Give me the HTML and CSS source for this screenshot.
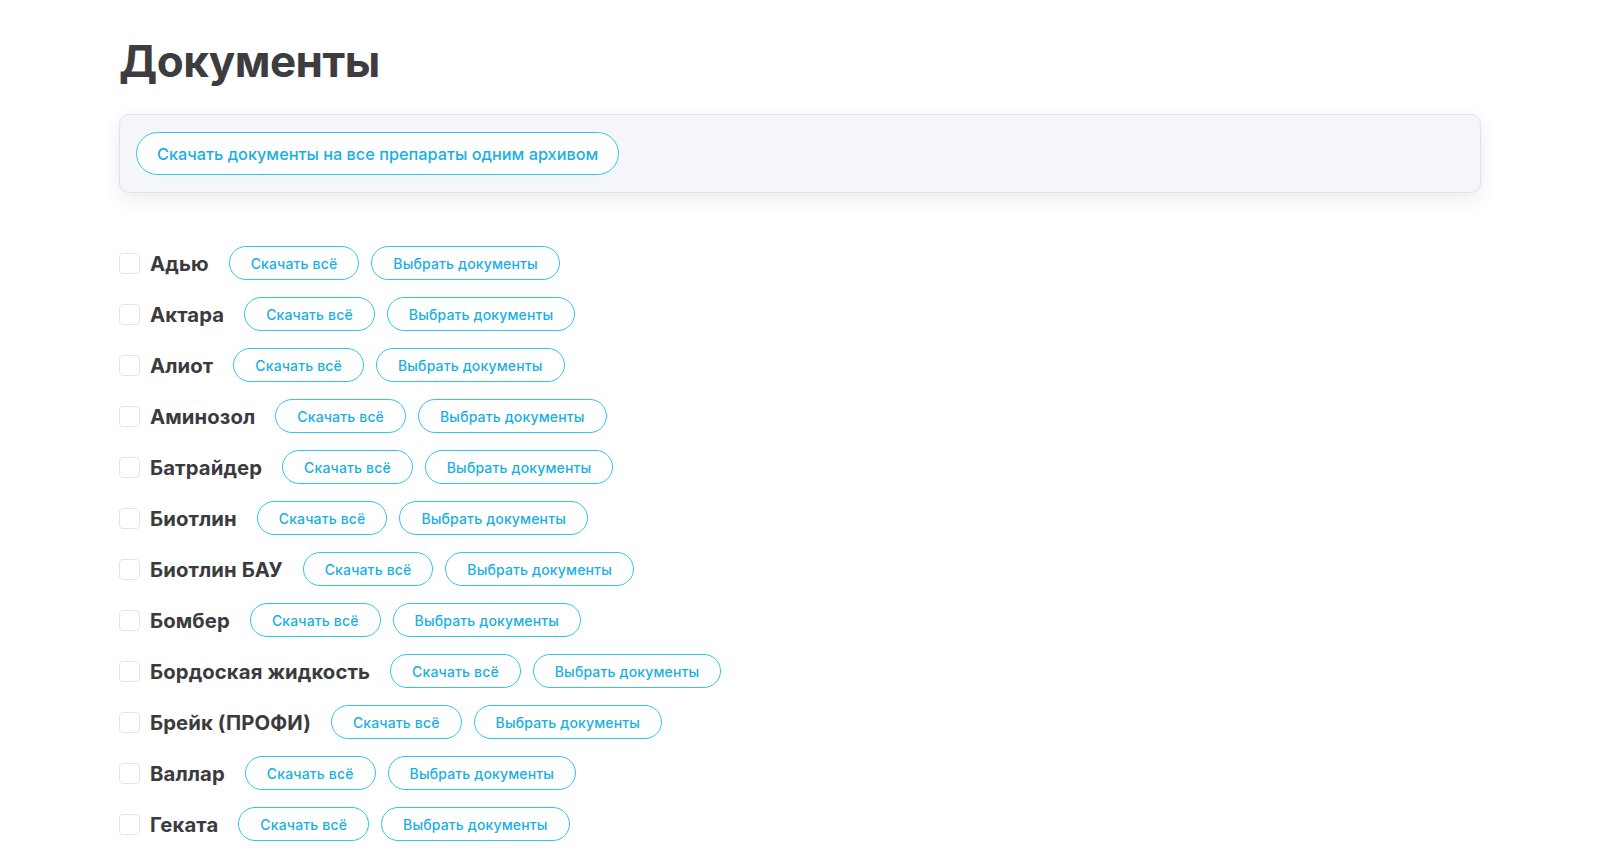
FILE: index.html
```html
<!DOCTYPE html>
<html lang="ru">

<head>
  <meta charset="UTF-8">
  <meta name="viewport" content="width=device-width, initial-scale=1.0">
  <title>Документы</title>

  <link rel="stylesheet" href="styles.css">
</head>

<body>
  <div id="page">
    <h1 class="title">Документы</h1>

    <div class="archive">
      <a class="btn btn-big" href="#">Скачать документы на все препараты одним архивом</a>
    </div>

    <ul class="docs">
      <li><label><span class="check"></span><span class="name">Адью</span></label><a class="btn" href="#">Скачать всё</a><a class="btn" href="#">Выбрать документы</a></li>
      <li><label><span class="check"></span><span class="name">Актара</span></label><a class="btn" href="#">Скачать всё</a><a class="btn" href="#">Выбрать документы</a></li>
      <li><label><span class="check"></span><span class="name">Алиот</span></label><a class="btn" href="#">Скачать всё</a><a class="btn" href="#">Выбрать документы</a></li>
      <li><label><span class="check"></span><span class="name">Аминозол</span></label><a class="btn" href="#">Скачать всё</a><a class="btn" href="#">Выбрать документы</a></li>
      <li><label><span class="check"></span><span class="name">Батрайдер</span></label><a class="btn" href="#">Скачать всё</a><a class="btn" href="#">Выбрать документы</a></li>
      <li><label><span class="check"></span><span class="name">Биотлин</span></label><a class="btn" href="#">Скачать всё</a><a class="btn" href="#">Выбрать документы</a></li>
      <li><label><span class="check"></span><span class="name">Биотлин БАУ</span></label><a class="btn" href="#">Скачать всё</a><a class="btn" href="#">Выбрать документы</a></li>
      <li><label><span class="check"></span><span class="name">Бомбер</span></label><a class="btn" href="#">Скачать всё</a><a class="btn" href="#">Выбрать документы</a></li>
      <li><label><span class="check"></span><span class="name">Бордоская жидкость</span></label><a class="btn" href="#">Скачать всё</a><a class="btn" href="#">Выбрать документы</a></li>
      <li><label><span class="check"></span><span class="name">Брейк (ПРОФИ)</span></label><a class="btn" href="#">Скачать всё</a><a class="btn" href="#">Выбрать документы</a></li>
      <li><label><span class="check"></span><span class="name">Валлар</span></label><a class="btn" href="#">Скачать всё</a><a class="btn" href="#">Выбрать документы</a></li>
      <li><label><span class="check"></span><span class="name">Геката</span></label><a class="btn" href="#">Скачать всё</a><a class="btn" href="#">Выбрать документы</a></li>
    </ul>
  </div>
</body>

</html>
```

FILE: styles.css
```css
* {
  margin: 0;
  padding: 0;
  box-sizing: border-box;
}

body {
  font-family: "Inter", "Noto Sans", sans-serif;
  background: #fff;
  color: #3b3a3d;
  overflow: hidden;
}

#page {
  padding: 33px 119px 0 119px;
}

.title {
  font-size: 44px;
  line-height: 56px;
  font-weight: 700;
  letter-spacing: -0.5px;
  color: #3d3c3f;
}

/* плашка со ссылкой на общий архив */
.archive {
  margin-top: 25px;
  height: 79px;
  padding: 17px 16px;
  background: #f5f6fa;
  border: 1px solid #dfe2e9;
  border-radius: 10px;
  box-shadow: 0 6px 18px rgba(30, 40, 70, 0.09);
}

.btn {
  display: inline-flex;
  align-items: center;
  justify-content: center;
  height: 34px;
  padding: 0 21px;
  border: 1px solid #34c3ec;
  border-radius: 17px;
  background: #fff;
  color: #1aafe2;
  font-size: 14px;
  font-weight: 500;
  letter-spacing: 0.15px;
  text-decoration: none;
  white-space: nowrap;
}

.btn-big {
  height: 43px;
  padding: 0 20px;
  border-radius: 22px;
  font-size: 16.3px;
  letter-spacing: 0;
}

.docs {
  list-style: none;
  margin-top: 53px;
  display: flex;
  flex-direction: column;
  gap: 17px;
}

.docs li {
  display: flex;
  align-items: center;
  gap: 12px;
}

.docs label {
  display: flex;
  align-items: center;
  margin-right: 8px;
}

.check {
  width: 21px;
  height: 21px;
  border: 1px solid #e1e4ea;
  border-radius: 4px;
  background: #fff;
  margin-right: 10px;
}

.name {
  font-size: 20.3px;
  font-weight: 700;
  letter-spacing: 0.1px;
  color: #3b3a3d;
}
```
